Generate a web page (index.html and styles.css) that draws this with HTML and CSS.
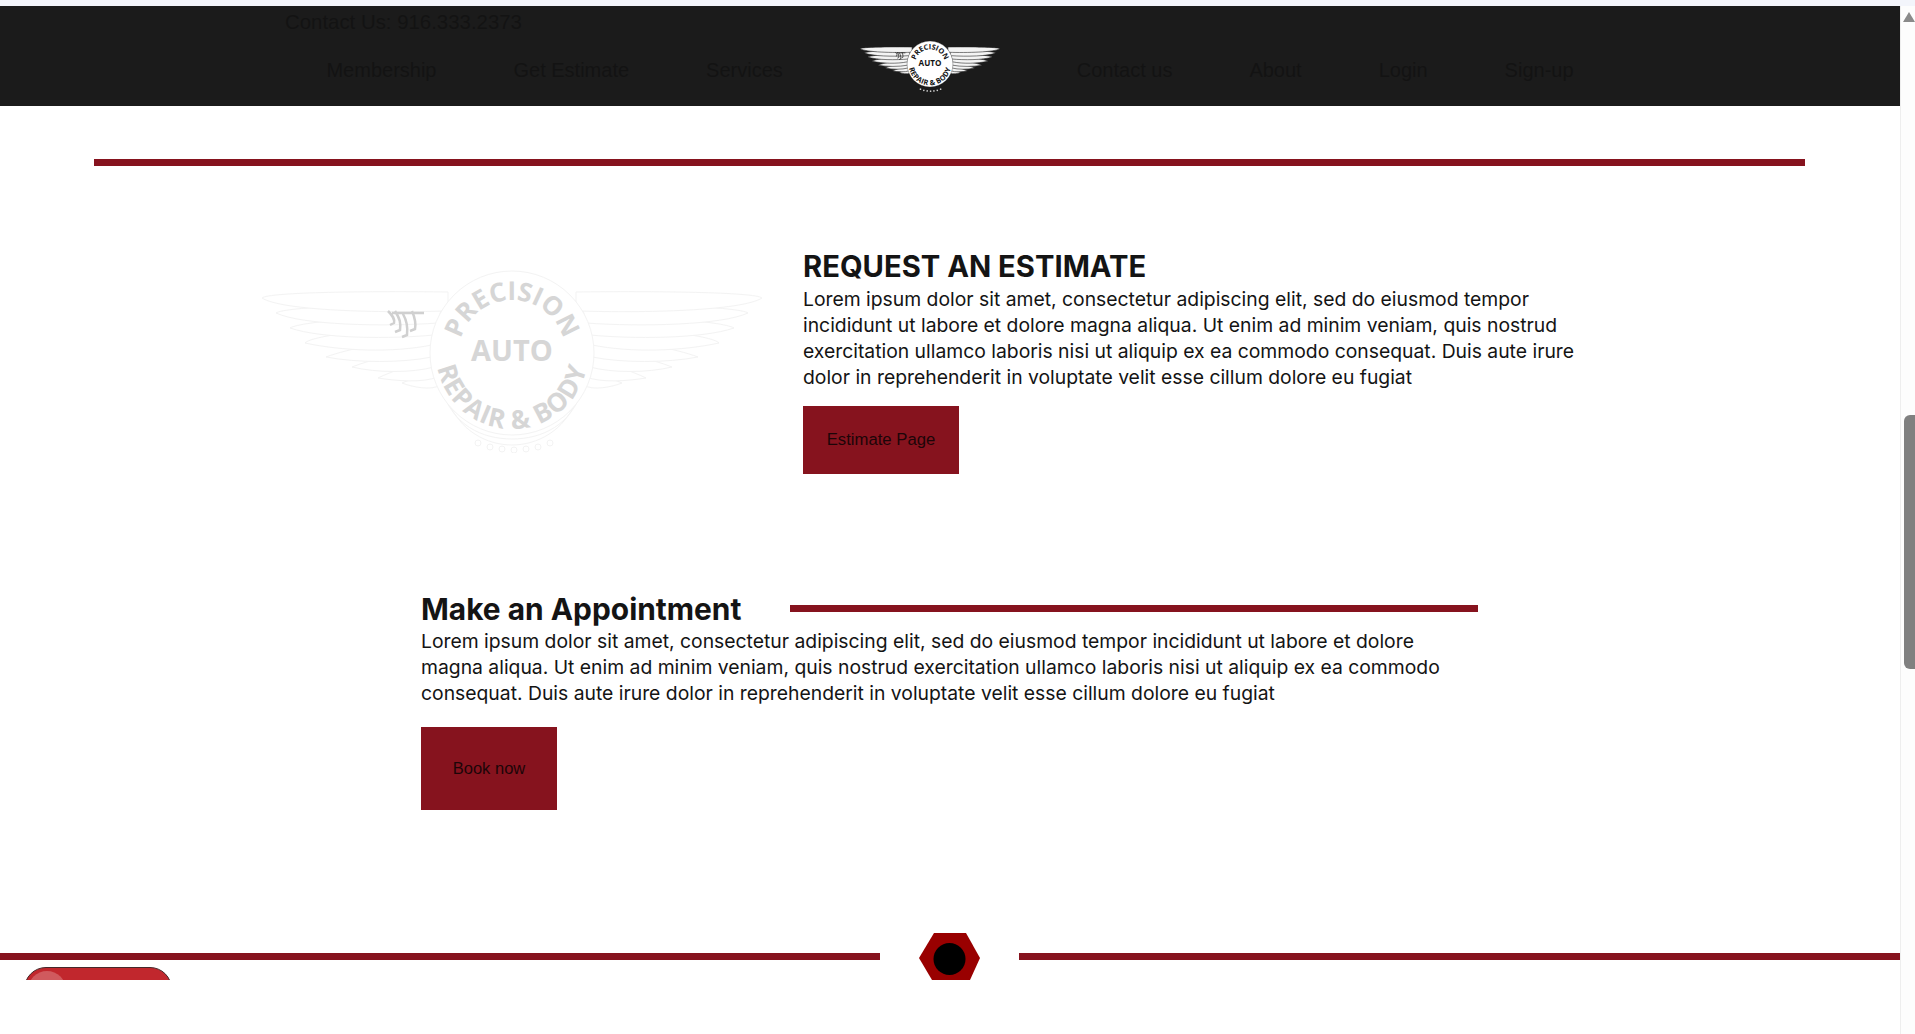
FILE: index.html
```html
<!DOCTYPE html>
<html lang="en">
<head>
<meta charset="utf-8">
<title>Precision Auto Repair &amp; Body</title>
<link rel="stylesheet" href="styles.css">
</head>
<body>
<svg class="defs" width="0" height="0" aria-hidden="true">
  <defs>
    <path id="arc-top" d="M197 86a53 53 0 0 1 106 0"/>
    <path id="arc-bottom" d="M174 86a76 76 0 0 0 152 0"/>
    <g id="wing">
      <path class="feather" d="M178 118C170 124 150 120 140 116C150 112 165 106 176 104Z"/>
      <path class="feather" d="M176 110C160 116 135 114 116 111C130 104 155 96 174 92Z"/>
      <path class="feather" d="M172 100C150 106 115 106 90 100C110 92 145 84 172 80Z"/>
      <path class="feather" d="M170 90C140 96 95 96 64 90C85 82 135 72 170 70Z"/>
      <path class="feather" d="M170 78C130 86 80 84 43 76C50 68 125 60 172 60Z"/>
      <path class="feather" d="M172 68C130 72 60 72 28 61C40 54 125 48 176 50Z"/>
      <path class="feather" d="M176 56C120 60 40 58 14 46C22 40 120 36 180 38Z"/>
      <path class="feather" d="M182 44C120 46 20 44 0 31C6 25 110 24 186 25L186 36Z"/>
    </g>
    <g id="emblem">
      <use href="#wing"/>
      <use href="#wing" transform="matrix(-1 0 0 1 500 0)"/>
      <path class="hook" d="M126 44c5 5 7 8 6 12l-4 2M133 44c5 8 6 12 5 19l-5 2M141 47c4 7 5 13 4 21l-5 2M150 44c3 7 4 13 3 18l-5 2M130 46h32"/>
      <path class="under" d="M180 122C190 158 220 172 250 172C280 172 310 158 320 122"/>
      <path class="under" d="M186 134C198 164 225 178 250 178C275 178 302 164 314 134"/>
      <circle class="seal" cx="250" cy="86" r="82"/>
      <g class="dentils">
        <circle cx="216" cy="176" r="3"/><circle cx="228" cy="180" r="3"/><circle cx="240" cy="182" r="3"/><circle cx="252" cy="183" r="3"/><circle cx="264" cy="182" r="3"/><circle cx="276" cy="180" r="3"/><circle cx="288" cy="176" r="3"/>
      </g>
      <text class="emblem-arc emblem-arc-top"><textPath href="#arc-top" startOffset="50%" text-anchor="middle">PRECISION</textPath></text>
      <text class="emblem-auto" x="250" y="94" text-anchor="middle">AUTO</text>
      <text class="emblem-arc"><textPath href="#arc-bottom" startOffset="50%" text-anchor="middle">REPAIR &amp; BODY</textPath></text>
    </g>
  </defs>
</svg>

<div class="top-strip"></div>
<div class="window">
  <div class="page">
    <header class="site-header">
      <div class="contact-line">Contact Us: 916.333.2373</div>
      <nav class="nav">
        <a class="nav-link">Membership</a>
        <a class="nav-link">Get Estimate</a>
        <a class="nav-link">Services</a>
        <svg class="logo" viewBox="0 0 500 186"><use href="#emblem"/></svg>
        <a class="nav-link">Contact us</a>
        <a class="nav-link">About</a>
        <a class="nav-link">Login</a>
        <a class="nav-link">Sign-up</a>
      </nav>
    </header>

    <main>
      <div class="rule-wide"></div>

      <section class="estimate">
        <svg class="watermark" viewBox="0 0 500 186"><use href="#emblem"/></svg>
        <div class="estimate-copy">
          <h2 class="title">REQUEST AN ESTIMATE</h2>
          <p class="copy">Lorem ipsum dolor sit amet, consectetur adipiscing elit, sed do eiusmod tempor incididunt ut labore et dolore magna aliqua. Ut enim ad minim veniam, quis nostrud exercitation ullamco laboris nisi ut aliquip ex ea commodo consequat. Duis aute irure dolor in reprehenderit in voluptate velit esse cillum dolore eu fugiat</p>
          <a class="btn btn-estimate">Estimate Page</a>
        </div>
      </section>

      <section class="appointment">
        <div class="appointment-head">
          <h2 class="title title-large">Make an Appointment</h2>
          <div class="rule-short"></div>
        </div>
        <p class="copy copy-wide">Lorem ipsum dolor sit amet, consectetur adipiscing elit, sed do eiusmod tempor incididunt ut labore et dolore magna aliqua. Ut enim ad minim veniam, quis nostrud exercitation ullamco laboris nisi ut aliquip ex ea commodo consequat. Duis aute irure dolor in reprehenderit in voluptate velit esse cillum dolore eu fugiat</p>
        <a class="btn btn-book">Book now</a>
      </section>
    </main>

    <footer class="footer-edge">
      <div class="rule-footer"></div>
      <svg class="nut" viewBox="-1 0 62 50">
        <polygon class="nut-body" points="14,0 46,0 60,25 50,47 12,47 -1,25"/>
        <circle class="nut-hole" cx="29.5" cy="26" r="16"/>
      </svg>
      <div class="rule-footer"></div>
      <div class="chat-pill"><span class="chat-shine"></span></div>
    </footer>
  </div>
  <aside class="scrollbar">
    <div class="scroll-arrow"></div>
    <div class="scroll-thumb"></div>
  </aside>
</div>
</body>
</html>
```

FILE: styles.css
```css
html, body {
  margin: 0;
  height: 1034px;
  overflow: hidden;
  background: #fff;
}
body {
  font-family: "Inter", "Liberation Sans", sans-serif;
  color: #141414;
}
.defs { position: absolute; }

.top-strip { height: 6px; background: #f3f5fb; }
.window { display: flex; align-items: flex-start; }
.page { width: 1900px; flex: none; }

/* header */
.site-header {
  height: 100px;
  box-sizing: border-box;
  padding-top: 4px;
  background: #1b1b1b;
  color: #131313;
  font-family: "Liberation Sans", Arial, sans-serif;
}
.contact-line {
  margin-left: 285px;
  font-size: 20.4px;
  line-height: 24px;
}
.nav {
  display: flex;
  justify-content: center;
  align-items: flex-start;
  gap: 77px;
  margin-top: 6px;
}
.nav-link {
  font-size: 20px;
  line-height: 60px;
}
.logo {
  width: 140px;
  height: 52px;
  --wing-fill: #f4f4f4;
  --wing-line: #1b1b1b;
  --wing-width: 2;
  --seal-fill: #fff;
  --seal-line: #1b1b1b;
  --ink: #111;
  --hook: #1b1b1b;
}

/* emblem parts */
.feather { fill: var(--wing-fill); stroke: var(--wing-line); stroke-width: var(--wing-width); }
.hook { fill: none; stroke: var(--hook); stroke-width: 2.5; }
.under { fill: none; stroke: var(--wing-line); stroke-width: 1; }
.seal { fill: var(--seal-fill); stroke: var(--seal-line); stroke-width: 1; }
.dentils circle { fill: var(--seal-fill); stroke: var(--wing-line); stroke-width: 1; }
.emblem-arc, .emblem-auto {
  fill: var(--ink);
  font-family: "Open Sans", "Liberation Sans", sans-serif;
  font-weight: 700;
}
.emblem-arc { font-size: 26px; letter-spacing: 0.8px; }
.emblem-arc-top { font-size: 26px; letter-spacing: 0; }
.emblem-auto { font-size: 29px; }

/* main */
.rule-wide {
  height: 7px;
  margin: 53px 95px 0 94px;
  background: #86131e;
}
.estimate {
  display: flex;
  align-items: flex-start;
  margin: 84px 0 0 262px;
}
.watermark {
  width: 500px;
  height: 186px;
  margin-top: 17px;
  flex: none;
  --wing-fill: #fff;
  --wing-line: #f3f3f3;
  --wing-width: 1;
  --seal-fill: #fff;
  --seal-line: #f3f3f3;
  --ink: #d6d6d6;
  --hook: #d0d0d0;
}
.estimate-copy { width: 790px; margin-left: 41px; }

.title {
  margin: 0;
  font-size: 29.2px;
  line-height: 34px;
  font-weight: 700;
  white-space: nowrap;
}
.title-large { font-size: 29.9px; }
.copy {
  margin: 2px 0 0;
  font-size: 19.33px;
  line-height: 26px;
}
.btn {
  display: flex;
  align-items: center;
  justify-content: center;
  background: #86131e;
  color: #1c0508;
  font-family: "Liberation Sans", Arial, sans-serif;
}
.btn-estimate {
  width: 156px;
  height: 68px;
  margin-top: 16px;
  font-size: 16.7px;
}
.btn-book {
  width: 136px;
  height: 83px;
  margin-top: 21px;
  font-size: 16.5px;
}

.appointment { margin: 118px 422px 0 421px; }
.appointment-head { display: flex; align-items: flex-start; }
.rule-short {
  flex: 1;
  height: 7px;
  margin: 13px 0 0 49px;
  background: #86131e;
}
.copy-wide { width: 1040px; margin-top: 2px; }

/* footer edge */
.footer-edge {
  position: relative;
  display: grid;
  grid-template-columns: 880px 1fr 881px;
  justify-items: center;
  height: 47px;
  margin-top: 123px;
  overflow: hidden;
}
.rule-footer {
  width: 100%;
  height: 7px;
  margin-top: 20px;
  background: #86131e;
}
.nut { width: 62px; height: 50px; }
.nut-body { fill: #990000; }
.nut-hole { fill: #000; }
.chat-pill {
  position: absolute;
  left: 24px;
  top: 34px;
  width: 148px;
  height: 60px;
  box-sizing: border-box;
  border: 1px solid #46282a;
  border-radius: 22px;
  background: #c1272d;
  overflow: hidden;
}
.chat-shine {
  display: block;
  width: 38px;
  height: 38px;
  margin: 3px 0 0 3px;
  border-radius: 50%;
  background: #d05a5e;
}

/* scrollbar */
.scrollbar {
  width: 14px;
  height: 1028px;
  flex: none;
  border-left: 1px solid #eeeeee;
  background: #fdfdfd;
}
.scroll-arrow {
  width: 0;
  height: 0;
  margin: 6px 0 0 2px;
  border-left: 6px solid transparent;
  border-right: 6px solid transparent;
  border-bottom: 10px solid #8a8a8a;
}
.scroll-thumb {
  height: 254px;
  margin: 393px 0 0 3px;
  border-radius: 6px 0 0 6px;
  background: #808080;
}
```
